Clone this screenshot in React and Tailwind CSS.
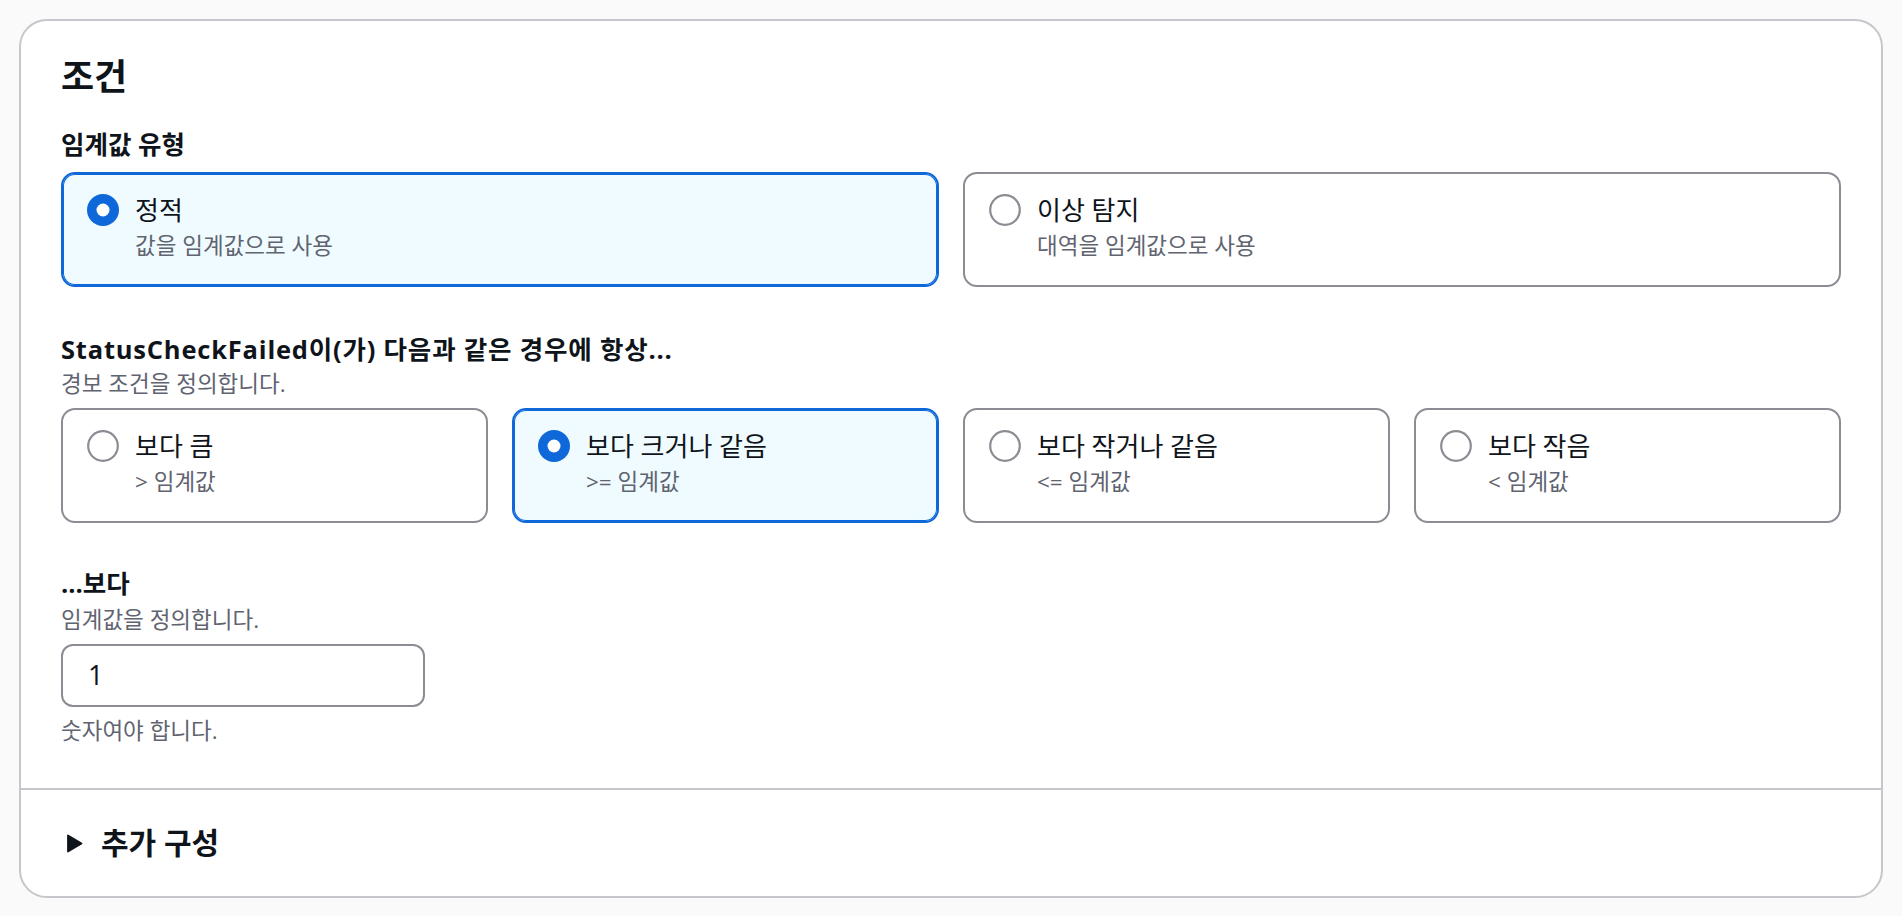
import React from "react";

function Radio({ checked }) {
  return checked ? (
    <svg width="32" height="32" viewBox="0 0 32 32" className="shrink-0">
      <circle cx="16" cy="16" r="16" fill="#0f68da" />
      <circle cx="16" cy="16" r="6.5" fill="#ffffff" />
    </svg>
  ) : (
    <svg width="32" height="32" viewBox="0 0 32 32" className="shrink-0">
      <circle cx="16" cy="16" r="14.8" fill="#ffffff" stroke="#8c8c94" strokeWidth="2.2" />
    </svg>
  );
}

function Tile({ checked, label, desc }) {
  return (
    <div
      className={
        checked
          ? "box-border h-[115px] rounded-[14px] border-2 border-[#0f68da] bg-[#f0fbff] pl-[24px] pt-[20px] shadow-[inset_0_0_0_1px_#0f68da]"
          : "box-border h-[115px] rounded-[14px] border-2 border-[#8c8c94] bg-white pl-[24px] pt-[20px]"
      }
    >
      <div className="flex items-center gap-[16px]">
        <Radio checked={checked} />
        <span className="text-[26px] leading-[32px] text-[#0f141a]">{label}</span>
      </div>
      <div className="mt-[6px] pl-[48px] text-[22.5px] leading-[28px] text-[#5f6470]">{desc}</div>
    </div>
  );
}

export default function App() {
  return (
    <div className="min-h-screen bg-[#fafafa] p-[19px] font-['Open_Sans','Noto_Sans_CJK_KR',sans-serif]">
      <div className="rounded-[28px] border-2 border-[#c6c6cd] bg-white">
        <div className="px-[40px] pt-[34px] pb-[43px]">
          <h2 className="text-[36px] font-bold leading-[44px] text-[#0f141a]">조건</h2>

          <div className="mt-[29px] text-[25.5px] font-bold leading-[32px] text-[#0f141a]">임계값 유형</div>
          <div className="mt-[12px] grid grid-cols-2 gap-[24px]">
            <Tile checked label="정적" desc="값을 임계값으로 사용" />
            <Tile label="이상 탐지" desc="대역을 임계값으로 사용" />
          </div>

          <div className="mt-[46px] text-[25.5px] font-bold leading-[32px] tracking-[0.8px] text-[#0f141a]">
            StatusCheckFailed이(가) 다음과 같은 경우에 항상...
          </div>
          <div className="mt-[5px] text-[22.5px] leading-[28px] text-[#5f6470]">경보 조건을 정의합니다.</div>
          <div className="mt-[10px] grid grid-cols-4 gap-[24px]">
            <Tile label="보다 큼" desc="> 임계값" />
            <Tile checked label="보다 크거나 같음" desc=">= 임계값" />
            <Tile label="보다 작거나 같음" desc="<= 임계값" />
            <Tile label="보다 작음" desc="< 임계값" />
          </div>

          <div className="mt-[44px] text-[25.5px] font-bold leading-[32px] text-[#0f141a]">...보다</div>
          <div className="mt-[7px] text-[22.5px] leading-[28px] text-[#5f6470]">임계값을 정의합니다.</div>
          <div className="mt-[10px] box-border flex h-[63px] w-[364px] items-center rounded-[12px] border-2 border-[#8c8c94] bg-white pl-[25px] text-[27px] text-[#0f141a]">
            1
          </div>
          <div className="mt-[10px] text-[22.5px] leading-[28px] text-[#5f6470]">숫자여야 합니다.</div>
        </div>

        <div className="flex h-[108px] items-center border-t-2 border-[#c6c6cd] pl-[45px]">
          <svg width="17" height="19" viewBox="0 0 17 19" className="shrink-0">
            <path d="M2 1.5 L15.5 9.5 L2 17.5 Z" fill="#0f141a" stroke="#0f141a" strokeWidth="1.8" strokeLinejoin="round" />
          </svg>
          <span className="ml-[18px] text-[30px] font-bold leading-[40px] text-[#0f141a]">추가 구성</span>
        </div>
      </div>
    </div>
  );
}
